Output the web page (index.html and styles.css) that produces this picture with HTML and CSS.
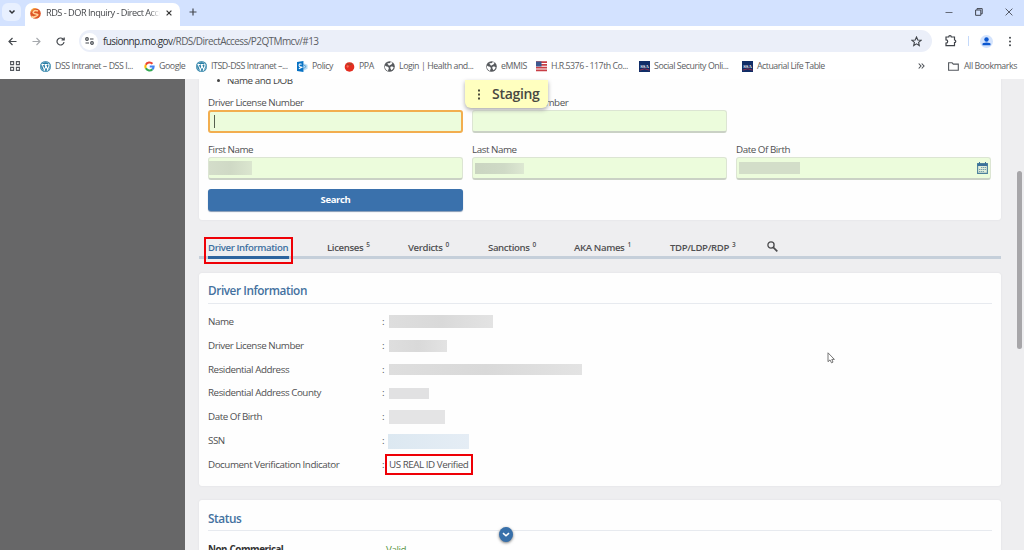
FILE: index.html
```html
<!DOCTYPE html>
<html lang="en">
<head>
<meta charset="utf-8">
<title>RDS - DOR Inquiry - Direct Access</title>
<link rel="stylesheet" href="styles.css">
</head>
<body>
<svg class="defs" width="0" height="0">
  <symbol id="wp" viewBox="0 0 24 24"><circle cx="12" cy="12" r="12" fill="#2b7fa6"/><circle cx="12" cy="12" r="10" fill="none" stroke="#d9edf5" stroke-width="1"/><path d="M3.5 7.5h6M5 8l4.500 12 3-8-1.500-4M10.500 7.500h6M12.500 8l4 11 3-8c.6-2-1-3-1-5" fill="none" stroke="#fff" stroke-width="2.200"/></symbol>
  <symbol id="globe" viewBox="0 0 24 24"><circle cx="12" cy="12" r="11.500" fill="#56595d"/><path d="M2 10c3 3 6 1 8 4s-2 4-1 8c-4-1-8-6-7-12zM8 4c2 2 5 0 7-2l4 2c-2 1-1 4-4 4s-2 3-4 2-1-3-3-3zM14 13c3-2 6 0 7 1-1 3-3 5-5 6-1-3-3-4-2-7z" fill="#fff"/></symbol>
  <symbol id="ssa" viewBox="0 0 24 24"><path fill="#102d67" d="M0 0h24v24H0z"/><path d="M2 20Q12 14 23 20" fill="none" stroke="#9b304b" stroke-width="2"/><text x="12" y="15.500" text-anchor="middle" class="ssa-text">SSA</text></symbol>
</svg>
<header class="chrome">
  <div class="tabstrip">
    <div class="tab-search"><svg width="8" height="6" viewBox="0 0 8 6"><path d="M1.500 1.500L4 4l2.500-2.500" fill="none" stroke="#303338" stroke-width="1.500"/></svg></div>
    <div class="browser-tab">
      <svg width="11" height="11" viewBox="0 0 11 11"><circle cx="5.500" cy="5.500" r="5.300" fill="#de5526"/><path d="M1 3.500A5 5 0 0 1 6 .5" fill="none" stroke="#f5a13d" stroke-width="1.200"/><path d="M8 3Q5 1.600 3.500 3.500T6 6 5.500 8.500 2.500 8" fill="none" stroke="#ffd39a" stroke-width="1.500"/></svg>
      <span class="tab-title">RDS - DOR Inquiry - Direct Acce</span>
      <svg width="6" height="6" viewBox="0 0 6 6"><path d="M.6.6l4.800 4.800M5.400.6L.6 5.400" stroke="#333" stroke-width="1.200"/></svg>
    </div>
    <svg class="new-tab" width="8" height="8" viewBox="0 0 8 8"><path d="M4 .5v7M.5 4h7" stroke="#45484f" stroke-width="1.200"/></svg>
    <div class="window-buttons">
      <svg width="8" height="8" viewBox="0 0 8 8"><path d="M.5 4.500h7" stroke="#656b78"/></svg>
      <svg width="8" height="8" viewBox="0 0 8 8"><path d="M.6 2h5.200v5.300H.6zM2 1.800V.6h5.200v5.200H6" fill="none" stroke="#40454f" stroke-width="1"/></svg>
      <svg width="8" height="8" viewBox="0 0 8 8"><path d="M.6.6l6.800 6.800M7.400.6L.6 7.400" stroke="#474c57" stroke-width=".9"/></svg>
    </div>
  </div>
  <div class="toolbar">
    <div class="nav-buttons">
      <svg width="9" height="9" viewBox="0 0 9 9"><path d="M8.500 4.500H1M4.500 1L1 4.500 4.500 8" fill="none" stroke="#45494e" stroke-width="1.200"/></svg>
      <svg width="9" height="9" viewBox="0 0 9 9"><path d="M.5 4.500H8M4.500 1L8 4.500 4.500 8" fill="none" stroke="#a6a9ad" stroke-width="1.100"/></svg>
      <svg width="9" height="9" viewBox="0 0 9 9"><path d="M8 5a3.500 3.500 0 1 1-1-3l1 1M8.200.5V3H5.500" fill="none" stroke="#45494e" stroke-width="1.200"/></svg>
    </div>
    <div class="omnibox">
      <span class="site-info"><svg width="9" height="8" viewBox="0 0 9 8"><g fill="none" stroke="#464a50" stroke-width="1.200"><circle cx="2" cy="2" r="1.300"/><path d="M5 2h3.500M.5 6H4"/><circle cx="7" cy="6" r="1.300"/></g></svg></span>
      <span class="url"><span class="host">fusionnp.mo.gov</span>/RDS/DirectAccess/P2QTMmcv/#13</span>
      <svg width="11" height="11" viewBox="0 0 11 11"><path d="M5.500 1l1.300 3 3.200.3-2.400 2.100.7 3.200-2.800-1.700-2.800 1.700.7-3.200L1 4.300l3.200-.3z" fill="none" stroke="#41454b" stroke-width="1.100"/></svg>
    </div>
    <div class="toolbar-actions">
      <svg width="12" height="12" viewBox="0 0 12 12"><path d="M1 2h2.700a1.300 1.300 0 0 1 2.600 0H9.500v3a1.300 1.300 0 0 1 0 2.600v3H1V8.200a1.700 1.700 0 0 0 0-3.400z" fill="none" stroke="#3f4349" stroke-width="1.200"/></svg>
      <i class="divider"></i>
      <svg width="13" height="13" viewBox="0 0 13 13"><circle cx="6.500" cy="6.500" r="6.500" fill="#d3e3fd"/><circle cx="6.500" cy="4.500" r="2.200" fill="#0b57d0"/><path d="M2.500 10.200V9q0-1.500 4-1.500t4 1.500v1.200z" fill="#0b57d0"/></svg>
      <svg width="4" height="11" viewBox="0 0 4 11"><g fill="#45494e"><circle cx="2" cy="1.700" r="1"/><circle cx="2" cy="5.500" r="1"/><circle cx="2" cy="9.300" r="1"/></g></svg>
    </div>
  </div>
  <div class="bookmarks">
    <svg class="apps" width="10" height="10" viewBox="0 0 10 10"><path d="M.6.6h3v3h-3zM6.400.6h3v3h-3zM.6 6.400h3v3h-3zM6.400 6.400h3v3h-3z" fill="none" stroke="#53575d" stroke-width="1.100"/></svg>
    <i class="divider"></i>
    <div class="bookmark-list">
      <span class="bookmark"><svg><use href="#wp"/></svg><span>DSS Intranet – DSS I...</span></span>
      <span class="bookmark"><svg viewBox="0 0 24 24"><g fill="none" stroke-width="4.500"><path d="M18.500 6A9 9 0 0 0 4 8" stroke="#ea4335"/><path d="M4 8a9 9 0 0 0 0 8" stroke="#fbbc05"/><path d="M4 16a9 9 0 0 0 14.500 2" stroke="#34a853"/><path d="M18.500 18q2.500-2.500 2.500-6h-8.500" stroke="#4285f4"/></g></svg><span>Google</span></span>
      <span class="bookmark"><svg><use href="#wp"/></svg><span>ITSD-DSS Intranet –...</span></span>
      <span class="bookmark"><svg viewBox="0 0 24 24"><path d="M14 5l9 3v9l-9 4z" fill="#b9dcf3"/><path d="M14 8l6 4-6 5" fill="none" stroke="#3489c7" stroke-width="1.500"/><path d="M0 2l14-2v24L0 22z" fill="#0872c4"/><path d="M10 7Q5 5 4.500 9t5 4-5.500 4" fill="none" stroke="#fff" stroke-width="2.200"/></svg><span>Policy</span></span>
      <span class="bookmark"><svg viewBox="0 0 24 24"><circle cx="12" cy="13" r="10.500" fill="#e42d20"/><path d="M7 4l5 3 5-3-1 5-4-1-4 2z" fill="#974b2c"/><circle cx="8" cy="12" r="2.500" fill="#f56b58"/></svg><span>PPA</span></span>
      <span class="bookmark"><svg><use href="#globe"/></svg><span>Login | Health and...</span></span>
      <span class="bookmark"><svg><use href="#globe"/></svg><span>eMMIS</span></span>
      <span class="bookmark"><svg viewBox="0 0 24 24"><path d="M0 1h24v22H0z" fill="#fff"/><path d="M0 2.500h24M0 8.500h24M0 14.500h24M0 20.500h24" stroke="#c83e45" stroke-width="3.500"/><path d="M0 1h12v11H0z" fill="#3c578f"/></svg><span class="bm-bill">H.R.5376 - 117th Co...</span></span>
      <span class="bookmark"><svg><use href="#ssa"/></svg><span>Social Security Onli...</span></span>
      <span class="bookmark"><svg><use href="#ssa"/></svg><span class="bm-life">Actuarial Life Table</span></span>
    </div>
    <svg class="overflow" width="7" height="6" viewBox="0 0 7 6"><path d="M.7.5L3 3 .7 5.500M3.700.5L6 3 3.700 5.500" fill="none" stroke="#4b4f55" stroke-width="1.100"/></svg>
    <i class="divider"></i>
    <span class="all-bookmarks"><svg width="11" height="9" viewBox="0 0 11 9"><path d="M.6 7.800V.8h3.500l1.200 1.300h5v6.100H.6z" fill="none" stroke="#53575d" stroke-width="1.100"/></svg>All Bookmarks</span>
  </div>
</header>
<div class="page">
  <aside class="sidebar"></aside>
  <main class="content">
    <section class="card search-card">
      <div class="bullet"><i></i><span>Name and DOB</span></div>
      <form class="search-form">
        <div class="field"><label>Driver License Number</label><div class="input focused"><i class="caret"></i></div></div>
        <div class="field"><label class="covered">Number</label><div class="input"></div></div>
        <div class="field first-name"><label>First Name</label><div class="input"><i class="mask mask-first"></i></div></div>
        <div class="field"><label>Last Name</label><div class="input"><i class="mask mask-last"></i></div></div>
        <div class="field"><label>Date Of Birth</label><div class="input"><i class="mask mask-dob"></i>
          <svg class="calendar" width="11" height="12" viewBox="0 0 11 12"><path d="M.6 1.500h9.800v9.900H.6z" fill="#e0edda" stroke="#4d819c" stroke-width="1.100"/><path d="M.5 3h10" stroke="#3b7199" stroke-width="2"/><path d="M2.500 0v2.500M8.500 0v2.500" stroke="#3b7199"/><path d="M4 5.500h5M2 7.500h7M2 9.500h5" stroke="#78a1ab" stroke-dasharray="1.400 .6"/></svg></div></div>
        <button class="search-button" type="button">Search</button>
      </form>
    </section>
    <nav class="tabs">
      <a class="tab active">Driver Information</a>
      <a class="tab">Licenses<sup>5</sup></a>
      <a class="tab">Verdicts<sup>0</sup></a>
      <a class="tab">Sanctions<sup>0</sup></a>
      <a class="tab">AKA Names<sup>1</sup></a>
      <a class="tab">TDP/LDP/RDP<sup>3</sup></a>
      <a class="tab"><svg width="11" height="11" viewBox="0 0 11 11"><circle cx="4" cy="4" r="3.100" fill="none" stroke="#4b4b4d" stroke-width="1.300"/><path d="M6.300 6.300l4 4" stroke="#4b4b4d" stroke-width="1.700"/></svg></a>
    </nav>
    <section class="card info-card">
      <h2>Driver Information</h2>
      <dl class="details">
        <dt>Name</dt><dd><i class="mask m-name"></i></dd>
        <dt>Driver License Number</dt><dd><i class="mask m-license"></i></dd>
        <dt>Residential Address</dt><dd><i class="mask m-address"></i></dd>
        <dt>Residential Address County</dt><dd><i class="mask m-county"></i></dd>
        <dt>Date Of Birth</dt><dd><i class="mask m-birth"></i></dd>
        <dt>SSN</dt><dd><i class="mask m-ssn"></i></dd>
        <dt>Document Verification Indicator</dt><dd><span class="verified">US REAL ID Verified</span></dd>
      </dl>
    </section>
    <section class="card status-card">
      <h2>Status</h2>
      <div class="status-row"><b>Non-Commerical</b><span>Valid</span></div>
    </section>
  </main>
  <div class="scrollbar"><div class="thumb"></div></div>
</div>
<div class="staging"><svg width="4" height="11" viewBox="0 0 4 11"><path d="M1 .5h2v2H1zM1 4.500h2v2H1zM1 8.500h2v2H1z" fill="#4c4c3d"/></svg><span>Staging</span></div>
<div class="scroll-down"><svg width="8" height="6" viewBox="0 0 8 6"><path d="M1 1.200l3 2.600 3-2.600" fill="none" stroke="#fff" stroke-width="1.600"/></svg></div>
<svg class="cursor" width="9" height="12" viewBox="0 0 9 12"><path d="M1 .8v8.900l2-1.800 1.500 2.900 1.500-.7-1.200-2.700h2.600z" fill="#fff" stroke="#666" stroke-width=".9"/></svg>
</body>
</html>
```
FILE: styles.css
```css
*, *::before, *::after { box-sizing: border-box; }
body {
  margin: 0; width: 1024px; height: 550px; overflow: hidden;
  display: flex; flex-direction: column; position: relative;
  font-family: "Open Sans", "Noto Sans", sans-serif; font-size: 9.8px;
  line-height: 14px; letter-spacing: -0.45px; color: #505052; background: #eeeef0;
}
svg { display: block; flex: none; }
i { display: block; }
.defs { position: absolute; }

/* Browser frame */
.chrome { height: 79px; background: #fff; flex: none; }
.tabstrip { height: 26px; background: #d3e2ff; display: flex; align-items: center; padding-left: 2px; }
.tab-search { width: 19px; height: 18px; margin-top: -2px; border-radius: 6px; background: #e8f0ff; display: grid; place-items: center; }
.browser-tab { width: 155px; height: 23px; margin: 3px 0 0 4px; padding: 0 8px 3px 5px; border-radius: 7px 7px 0 0; background: #fff; display: flex; align-items: center; }
.tab-title { width: 114px; margin: 0 6px 0 5px; flex: none; overflow: hidden; white-space: nowrap; color: #46484c; font-size: 9.2px; letter-spacing: -.5px; mask-image: linear-gradient(90deg, #000 90%, transparent); }
.new-tab { margin: -2px 0 0 9px; }
.window-buttons { margin: -2px 11px 0 auto; display: flex; gap: 22px; }
.toolbar { height: 30px; display: flex; align-items: center; padding-left: 8px; }
.nav-buttons { width: 71px; display: flex; gap: 15px; }
.omnibox { width: 853px; height: 22px; border-radius: 11px; background: #ebeff9; display: flex; align-items: center; padding: 0 10px 0 2px; }
.site-info { width: 17px; height: 17px; border-radius: 50%; background: #fff; display: grid; place-items: center; }
.url { margin-left: 5px; flex: 1; font-size: 10px; letter-spacing: -.58px; color: #5b5e64; }
.host { color: #2e3136; }
.toolbar-actions { display: flex; align-items: center; margin-left: 13px; }
.divider { width: 1px; height: 10px; background: #c4d9fa; }
.toolbar-actions .divider { margin: 0 11px; }
.toolbar-actions svg:last-child { margin-left: 15px; }
.bookmarks { height: 22px; display: flex; align-items: center; padding: 0 9px 2px 10px; font-size: 8.8px; letter-spacing: -.44px; color: #5d6063; }
.bookmarks > .divider:nth-of-type(1) { margin-left: 10px; }
.bookmark-list { width: 877px; margin-left: 10px; display: grid; grid-template-columns: 104px 52px 101px 47px 40px 102px 50px 103px 103px 1fr; flex: none; }
.bookmark { display: flex; align-items: center; gap: 4px; white-space: nowrap; }
.bookmark svg { width: 11px; height: 11px; }
.bm-bill, .bm-life { letter-spacing: -.5px; }
.ssa-text { font: bold 10px "Liberation Serif", serif; letter-spacing: 0; fill: #fff; }
.overflow { margin: 0 12px 0 1px; }
.bookmarks > .overflow + .divider { margin-left: 0; }
.all-bookmarks { display: flex; align-items: center; gap: 5px; margin-left: 11px; white-space: nowrap; }

/* Application page */
.page { display: flex; height: 471px; overflow: hidden; }
.sidebar { width: 185px; background: #676768; flex: none; }
.content { width: 816px; padding-left: 14px; flex: none; }
.card { background: #fefefe; border-radius: 0 0 3px 3px; box-shadow: 0 0 2px #dcdce0; padding: 0 9px; }
.search-card { height: 141px; }
.bullet { height: 16px; overflow: hidden; display: flex; align-items: center; gap: 7px; padding: 0 0 13px 9px; color: #444; line-height: 12px; }
.bullet i { width: 3px; height: 3px; border-radius: 50%; background: #444; }
.search-form { display: grid; grid-template-columns: repeat(3, 255px); column-gap: 9px; }
.first-name { grid-column: 1; }
.field { height: 47px; padding-top: 1px; }
.field label { display: block; height: 14px; }
.field .covered { padding-left: 61px; }
.input { height: 23px; display: flex; align-items: center; background: #ecfcdc; border: 1px solid #dce5d3; border-bottom: 2px solid #cad1c5; border-radius: 3px; }
.input.focused { border: 2px solid #f2ae4f; }
.caret { width: 1px; height: 13px; background: #56604f; margin-left: 4px; }
.mask { background: linear-gradient(90deg, #dedede, #d9d9d9 50%, #e3e3e3); }
.mask-first { width: 43px; height: 14px; background: linear-gradient(90deg, #d4ddca, #cfd9c5 50%, #dbe6cf); }
.mask-last { width: 49px; height: 11px; margin-left: 2px; background: linear-gradient(90deg, #cad5c1, #cfdac6 60%, #dde8d2); }
.mask-dob { width: 61px; height: 12px; margin-left: 2px; background: #d3dec9; }
.calendar { margin: 0 2px 0 auto; }
.search-button { grid-column: 1; width: 255px; height: 22px; padding: 0 0 1px; border: 0; border-radius: 3px; background: #3a71ac; box-shadow: 0 1px 1px #8298b4; color: #fff; font: 700 9.5px/20px "Open Sans", sans-serif; letter-spacing: -.35px; }
.tabs { height: 39px; padding: 20px 9px 0; border-bottom: 3px solid #c5cfda; display: grid; grid-template-columns: 119px 81px 80px 86px 96px 97px 11px; font-size: 9.6px; line-height: 15px; letter-spacing: -.37px; font-weight: 600; white-space: nowrap; }
.tab { position: relative; height: 14px; }
.tab sup { margin-left: 3px; font-size: 6.500px; line-height: 0; vertical-align: 4px; }
.tab svg { margin-top: 1px; }
.tab.active { width: 81px; color: #3c6e9f; }
.tab.active::before { content: ""; position: absolute; left: 0; top: 16px; width: 81px; height: 3px; background: #2d649f; }
.tab.active::after { content: ""; position: absolute; left: -4px; top: -3px; width: 89px; height: 27px; border: 2px solid #ee0006; }
.info-card { height: 213px; margin-top: 14px; padding-top: 9px; border-radius: 3px; }
h2 { margin: 0; height: 22px; border-bottom: 1px solid #e7eaef; color: #44719f; font-size: 11.8px; line-height: 17px; font-weight: 600; letter-spacing: -.43px; }
.details { margin: 6px 0 0; display: grid; grid-template-columns: 174px 1fr; grid-auto-rows: 23.850px; align-items: center; }
dt { white-space: nowrap; }
dd { margin: 0; display: flex; align-items: center; }
dd::before { content: ":"; width: 7px; }
.m-name { width: 104px; height: 13px; }
.m-license { width: 58px; height: 12px; }
.m-address { width: 193px; height: 11px; }
.m-county { width: 40px; height: 11px; background: #e1e1e2; }
.m-birth { width: 56px; height: 14px; background: #e4e4e5; }
.m-ssn { width: 81px; height: 15px; margin-left: -1px; background: linear-gradient(90deg, #dce8f1, #e5edf5); }
.verified { position: relative; white-space: nowrap; }
.verified::after { content: ""; position: absolute; left: -4px; top: -4px; width: 88px; height: 21px; border: 2px solid #ee0006; }
.status-card { height: 70px; margin-top: 14px; padding-top: 9px; border-radius: 3px; }
.status-card h2 { line-height: 19px; }
.status-row { display: grid; grid-template-columns: 178px 1fr; margin-top: 12px; }
.status-row b { color: #333; letter-spacing: -.5px; }
.status-row span { color: #589442; }
.scrollbar { width: 23px; padding: 92px 2px 0 16px; }
.thumb { height: 178px; border-radius: 3px; background: #a7a6a9; }

/* Floating controls */
.staging { position: absolute; left: 465px; top: 80px; width: 83px; height: 28px; border-radius: 0 0 6px 6px; background: #ffffbf; box-shadow: 0 2px 4px #aaa; display: flex; align-items: center; gap: 11px; padding-left: 12px; color: #484842; font-size: 14px; font-weight: 600; letter-spacing: -.3px; }
.scroll-down { position: absolute; left: 499px; top: 527px; width: 14px; height: 15px; border-radius: 50%; background: #3870aa; box-shadow: 0 1px 3px #777; display: grid; place-items: center; }
.cursor { position: absolute; left: 827px; top: 352px; }
```
